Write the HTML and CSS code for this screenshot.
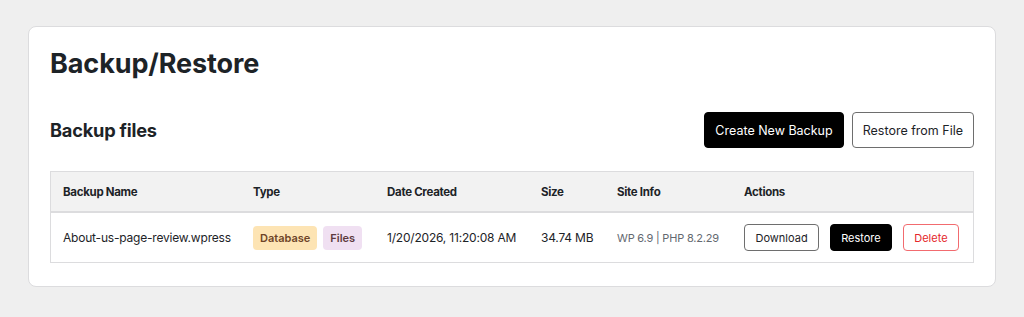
FILE: index.html
```html
<!DOCTYPE html>
<html lang="en">
<head>
  <meta charset="UTF-8">
  <meta name="viewport" content="width=device-width, initial-scale=1.0">
  <title>Backup/Restore</title>
  <link rel="stylesheet" href="styles.css">
</head>
<body>
  <div class="wrap">
    <h1>Backup/Restore</h1>
    <div class="section-head">
      <h2>Backup files</h2>
      <div class="head-actions">
        <button class="btn btn-dark">Create New Backup</button>
        <button class="btn btn-outline">Restore from File</button>
      </div>
    </div>
    <table class="backups">
      <thead>
        <tr>
          <th class="col-name">Backup Name</th>
          <th class="col-type">Type</th>
          <th class="col-date">Date Created</th>
          <th class="col-size">Size</th>
          <th class="col-info">Site Info</th>
          <th>Actions</th>
        </tr>
      </thead>
      <tbody>
        <tr>
          <td>About-us-page-review.wpress</td>
          <td>
            <div class="badges">
              <span class="badge badge-db">Database</span>
              <span class="badge badge-files">Files</span>
            </div>
          </td>
          <td>1/20/2026, 11:20:08 AM</td>
          <td>34.74 MB</td>
          <td class="site-info">WP 6.9 | PHP 8.2.29</td>
          <td>
            <div class="row-actions">
              <button class="btn btn-sm btn-outline">Download</button>
              <button class="btn btn-sm btn-dark">Restore</button>
              <button class="btn btn-sm btn-danger">Delete</button>
            </div>
          </td>
        </tr>
      </tbody>
    </table>
  </div>
</body>
</html>
```

FILE: styles.css
```css
body {
  margin: 0;
  padding: 26px 28px;
  background: #efefef;
  font-family: Inter, "Liberation Sans", sans-serif;
  color: #1d2327;
}
.wrap {
  background: #fff;
  border: 1px solid #dcdcde;
  border-radius: 8px;
  padding: 19px 21px 23px;
}
h1 {
  margin: 0;
  font-size: 27px;
  font-weight: 700;
  line-height: 36px;
  letter-spacing: -0.1px;
}
.section-head {
  display: flex;
  align-items: center;
  justify-content: space-between;
  margin-top: 30px;
}
h2 {
  margin: 0;
  font-size: 18.2px;
  font-weight: 700;
  letter-spacing: -0.2px;
}
.head-actions {
  display: flex;
  gap: 8px;
}
.btn {
  font-family: inherit;
  font-size: 12.5px;
  height: 36px;
  padding: 0 10px;
  border-radius: 4px;
  cursor: pointer;
  border: 1px solid #000;
  white-space: nowrap;
}
.btn-dark {
  background: #000;
  color: #fff;
}
.btn-outline {
  background: #fff;
  color: #1d2327;
  border-color: #6e6e6e;
}
.btn-danger {
  background: #fff;
  color: #e5262c;
  border-color: #f26b6f;
}
.btn-sm {
  height: 27px;
  font-size: 11px;
  padding: 0 10.5px;
}
.backups {
  width: 100%;
  margin-top: 23px;
  border-collapse: collapse;
  table-layout: fixed;
  border: 1px solid #dcdcde;
  font-size: 12px;
  letter-spacing: -0.2px;
}
.backups th {
  background: #f2f2f2;
  text-align: left;
  font-size: 11.5px;
  font-weight: 650;
  letter-spacing: -0.3px;
  height: 39px;
  padding: 0 12px;
  border-bottom: 2px solid #dcdcde;
  white-space: nowrap;
}
.backups td {
  height: 49px;
  padding: 0 12px;
  white-space: nowrap;
}
.col-name { width: 166px; }
.col-type { width: 110px; }
.col-date { width: 130px; }
.col-size { width: 52px; }
.col-info { width: 103px; }
.site-info {
  color: #646970;
  font-size: 11px;
}
.badges {
  display: flex;
  gap: 6px;
  letter-spacing: 0;
}
.badge {
  font-size: 11px;
  font-weight: 600;
  line-height: 24px;
  padding: 0 7px;
  border-radius: 4px;
}
.badge-db {
  background: #fde4b4;
  color: #6e4428;
}
.badge-files {
  background: #f0e0f2;
  color: #5e3a3e;
}
.row-actions {
  display: flex;
  gap: 10.5px;
  letter-spacing: 0;
}
```
